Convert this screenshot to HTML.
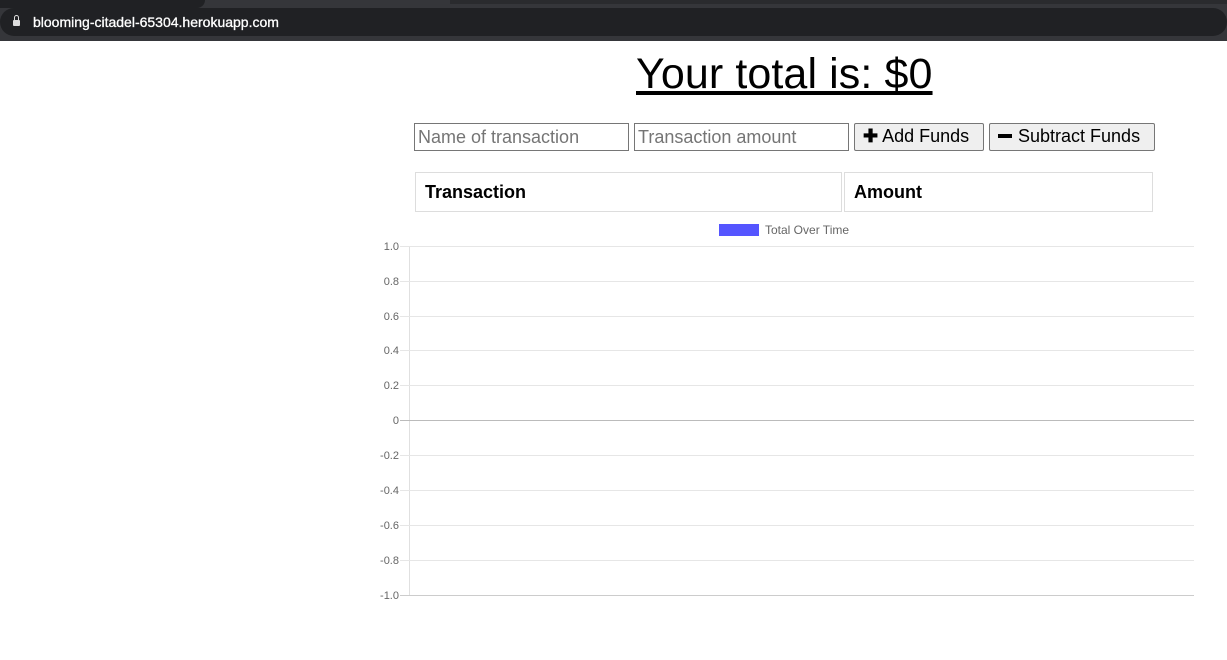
<!DOCTYPE html>
<html><head><style>
*{margin:0;padding:0;box-sizing:border-box}
body{width:1227px;height:660px;background:#fff;font-family:"Liberation Sans",sans-serif;position:relative;overflow:hidden}
.a{position:absolute}
.inp{border:1px solid #767676;height:28px;font-size:18px;color:#757575;padding:2px 3px;line-height:22px}
.btn{border:1px solid #767676;background:#efefef;height:28px;font-size:18px;color:#000;border-radius:2px;line-height:25px;padding-left:8px}
.cell{border:1px solid #ddd;height:40px;font-weight:bold;font-size:18px;padding:9px 9px;line-height:20px}
.yl{position:absolute;width:40px;text-align:right;font-size:11px;color:#666;left:359px}
.g{position:absolute;left:400px;width:794px;height:1px;background:#e6e6e6}
</style></head><body>
<div class="a" style="left:0;top:0;width:1227px;height:41px;background:#35363a"></div>
<div class="a" style="left:0;top:0;width:205px;height:8px;background:#202124;border-radius:0 0 8px 0"></div>
<div class="a" style="left:450px;top:0;width:777px;height:4px;background:#2a2b2e"></div>
<div class="a" style="left:0;top:8px;width:1227px;height:28px;background:#202124;border-radius:14px"></div>
<div class="a" style="left:13px;top:20px;width:7px;height:6px;background:#ddd;border-radius:1px"></div>
<div class="a" style="left:14px;top:15px;width:5px;height:7px;border:1.5px solid #ddd;border-radius:3px 3px 0 0"></div>
<div class="a" style="left:33px;top:14px;font-size:14px;color:#fff;line-height:16px;-webkit-text-stroke:0.3px #fff">blooming-citadel-65304.herokuapp.com</div>
<div class="a" style="left:636px;top:50px;font-size:43px;line-height:48px;text-decoration:underline;letter-spacing:0.1px">Your total is: $0</div>
<div class="a inp" style="left:414px;top:123px;width:215px">Name of transaction</div>
<div class="a inp" style="left:634px;top:123px;width:215px">Transaction amount</div>
<div class="a btn" style="left:854px;top:123px;width:130px"><b>✚</b> Add Funds</div>
<div class="a btn" style="left:989px;top:123px;width:166px"><b style="display:inline-block;width:14px;height:4px;background:#000;vertical-align:middle;margin-right:6px;margin-top:-3px"></b>Subtract Funds</div>
<div class="a cell" style="left:415px;top:172px;width:427px">Transaction</div>
<div class="a cell" style="left:844px;top:172px;width:309px">Amount</div>
<div class="a" style="left:719px;top:224px;width:40px;height:12px;background:#5555ff"></div>
<div class="a" style="left:765px;top:223px;font-size:12px;color:#666">Total Over Time</div>
<div class="a" style="left:409px;top:246px;width:1px;height:350px;background:#e0e0e0"></div>
<div class="g" style="top:246px"></div><div class="g" style="top:281px"></div><div class="g" style="top:316px"></div><div class="g" style="top:350px"></div><div class="g" style="top:385px"></div><div class="g" style="top:420px;background:#bbb"></div><div class="g" style="top:455px"></div><div class="g" style="top:490px"></div><div class="g" style="top:525px"></div><div class="g" style="top:560px"></div><div class="g" style="top:595px;background:#ccc"></div>
<div class="yl" style="top:241px">1.0</div><div class="yl" style="top:276px">0.8</div><div class="yl" style="top:311px">0.6</div><div class="yl" style="top:345px">0.4</div><div class="yl" style="top:380px">0.2</div><div class="yl" style="top:415px">0</div><div class="yl" style="top:450px">-0.2</div><div class="yl" style="top:485px">-0.4</div><div class="yl" style="top:520px">-0.6</div><div class="yl" style="top:555px">-0.8</div><div class="yl" style="top:590px">-1.0</div>
</body></html>
